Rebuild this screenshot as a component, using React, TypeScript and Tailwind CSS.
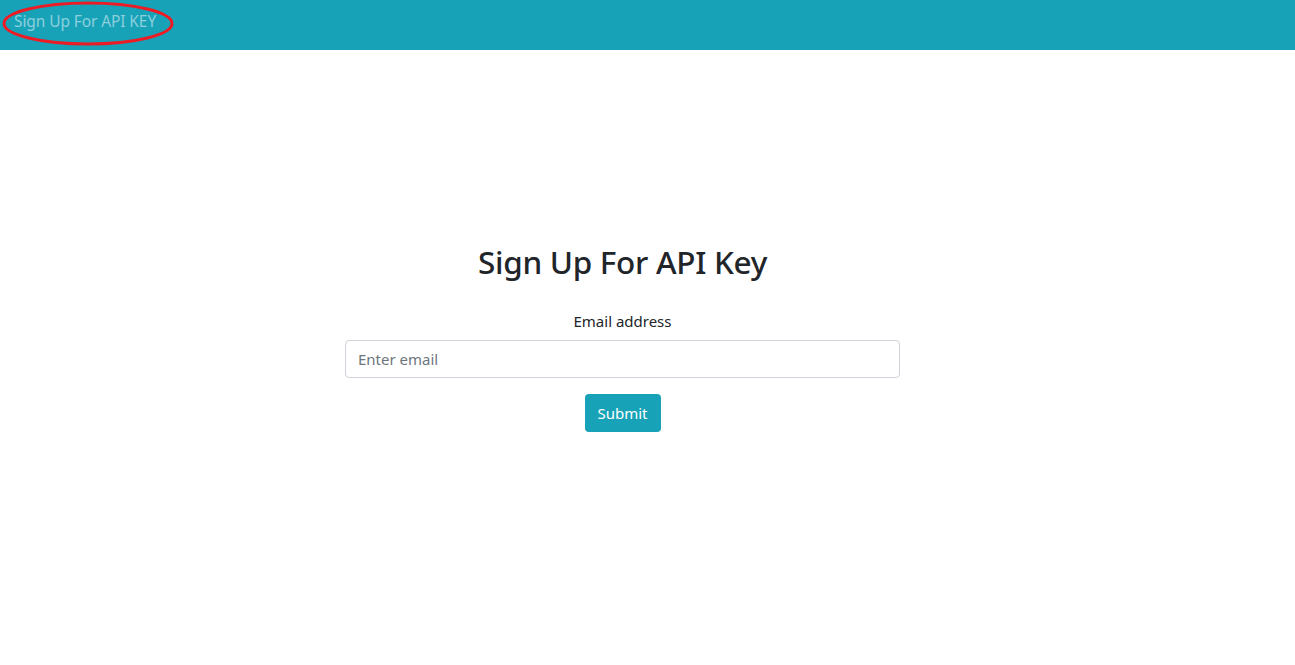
import React from "react";

export default function App() {
  return (
    <div className="min-h-[665px] w-[1295px] bg-white" style={{ fontFamily: '"Noto Sans", "Open Sans", sans-serif' }}>
      <nav className="relative flex h-[50px] items-center bg-[#17a2b8] px-[14px] pb-[6px]">
        <span className="text-[15.5px] text-white/50 tracking-[-0.1px]">Sign Up For API KEY</span>
        <svg className="pointer-events-none absolute left-[2px] top-[1px]" width="172" height="45" viewBox="0 0 172 45">
          <ellipse cx="86" cy="22.5" rx="84" ry="20.5" fill="none" stroke="#ed1c24" strokeWidth="3" />
        </svg>
      </nav>
      <div className="flex w-[1245px] flex-col items-center pt-[193px]">
        <h2 className="text-[31.5px] font-medium leading-[1.2] text-[#212529] tracking-[-0.3px]">Sign Up For API Key</h2>
        <label className="mt-[29px] text-[15px] text-[#212529]">Email address</label>
        <input
          type="email"
          placeholder="Enter email"
          className="mt-[8px] h-[38px] w-[555px] rounded-[4px] border border-[#ced4da] px-[12px] text-[15px] text-[#495057] placeholder:text-[#6c757d] outline-none"
        />
        <button className="mt-[16px] h-[38px] w-[76px] rounded-[4px] bg-[#17a2b8] text-[15px] text-white">Submit</button>
      </div>
    </div>
  );
}
